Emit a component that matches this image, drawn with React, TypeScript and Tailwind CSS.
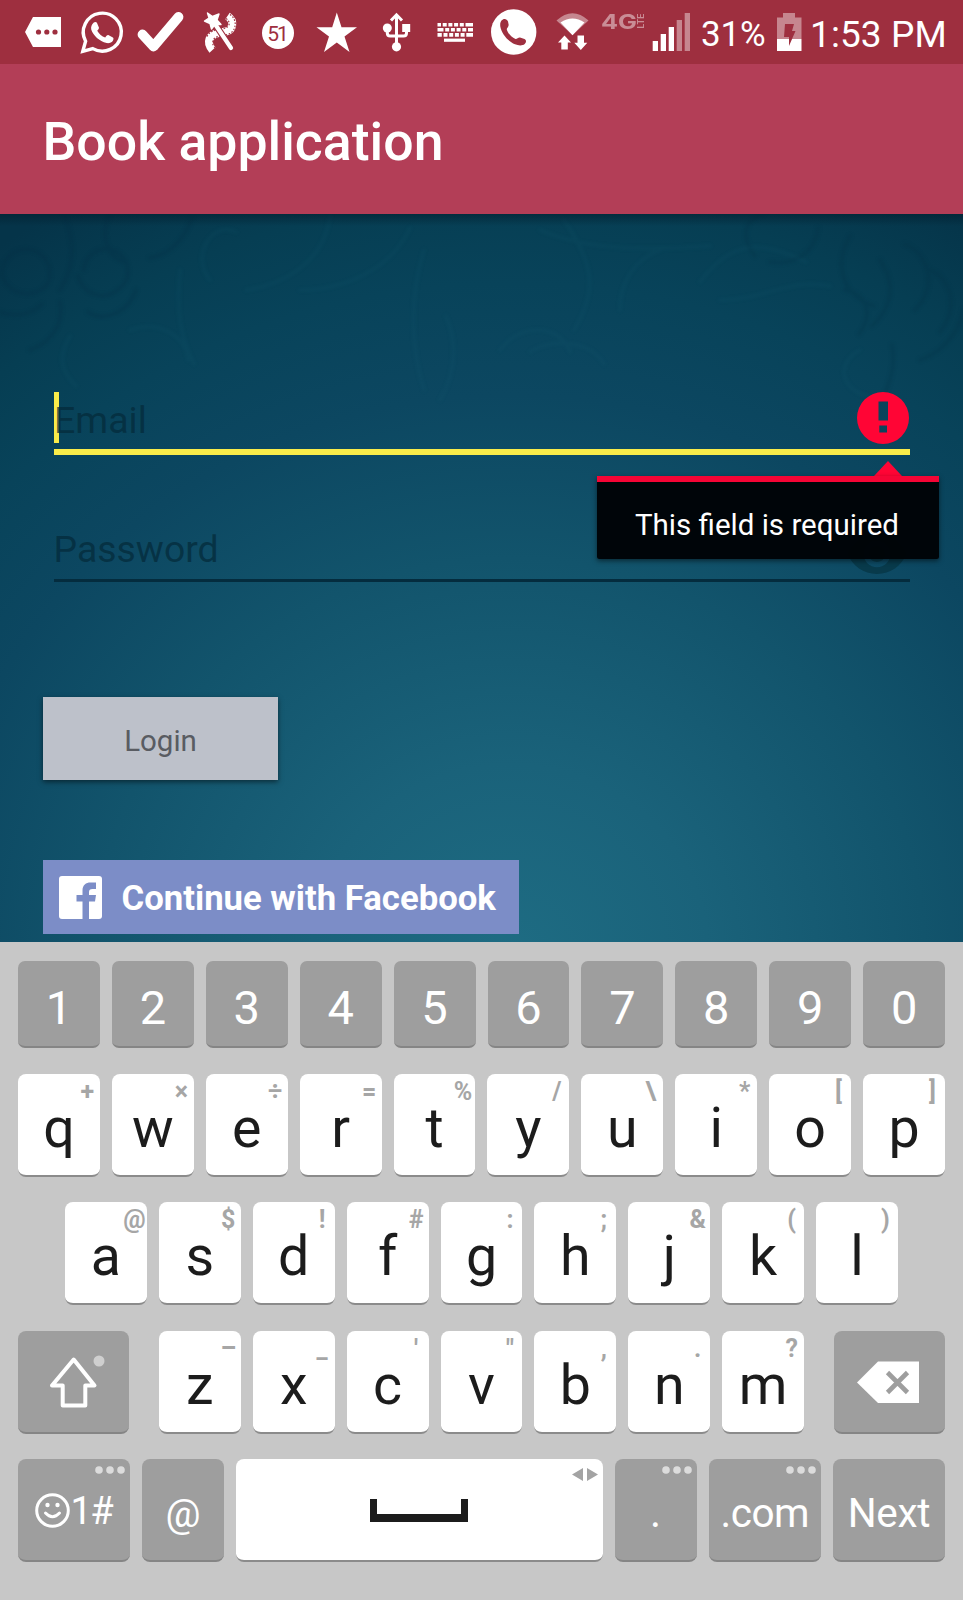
import React from "react";

type IconProps = { x: number; w: number; className: string; children: React.ReactNode };

/* One slot of the status bar; every glyph shares the bar's coordinate space. */
function Slot({ x, w, className, children }: IconProps) {
  return (
    <svg viewBox={`${x} 0 ${w} 64`} className={`h-16 shrink-0 ${className}`} fill="#fff">
      {children}
    </svg>
  );
}

function StatusBar() {
  return (
    <div className="flex h-16 w-full shrink-0 items-start bg-[#9e2f3f] text-white">
      <Slot x={0} w={70} className="w-[70px]">
        <path d="M25 32 33 17H61V47H33Z" />
        <g fill="#9e2f3f">
          <circle cx="38.5" cy="32" r="2.6" />
          <circle cx="46.8" cy="32" r="2.6" />
          <circle cx="55" cy="32" r="2.6" />
        </g>
      </Slot>
      <Slot x={70} w={60} className="w-[60px]">
        <path
          d="M82.8 51.3 85.6 41.2A19 19 0 1 1 92.8 48.6Z"
          fill="none"
          stroke="#fff"
          strokeWidth="3.4"
          strokeLinejoin="miter"
        />
        <path d="M93.800 22.600c.800-.800 2.600-.800 3.100.200l2 4.600c.300.800-.200 1.600-1.700 3.300 2 3.500 4.600 5.600 8 6.900 1.700-2.300 2.300-2.800 3.100-2.500l4.600 2.300c.8.5.7 1.700.1 3.100-1 2.100-4.300 3-6.300 2.500-7.500-1.700-13.300-7.200-15.400-13.200-.7-2.600.5-5.600 2.500-7.200Z" />
      </Slot>
      <Slot x={130} w={60} className="w-[60px]">
        <path
          d="M142.500 34.500 153.500 46.500 178.500 17"
          fill="none"
          stroke="#fff"
          strokeWidth="9.800"
          strokeLinecap="round"
          strokeLinejoin="round"
        />
      </Slot>
      <Slot x={190} w={60} className="w-[60px]">
        <path
          d="M227.500 16C235 21 233 30 226 31.500 219 33 212 33 209.500 39 208 43 209 46 212.500 50"
          fill="none"
          stroke="#fff"
          strokeWidth="8"
        />
        <path
          d="M226 18.500C231 22 230 27 224.500 28.500 217 30 209 30 206.500 38M230 14.500C238 20 236.500 32 227.500 34.500 220 36.500 214 36 213 41 212 44 213.500 46 215 48"
          fill="none"
          stroke="#9e2f3f"
          strokeWidth="1.100"
          strokeDasharray="1.600 1.600"
        />
        <path d="M217 27 231 48" stroke="#9e2f3f" strokeWidth="6.500" />
        <path d="M215 24 231 48" stroke="#fff" strokeWidth="4.200" strokeLinecap="round" />
        <path
          d="M207.500 13 212.500 16.500 219 14 217 20 221 24.500 215 24.500 211.500 29 210 23.500 204.500 21 209 18Z"
          stroke="#fff"
          strokeWidth="1.400"
          strokeLinejoin="round"
        />
      </Slot>
      <Slot x={250} w={55} className="w-[55px]">
        <circle cx="278" cy="33" r="16" />
        <text
          x="277"
          y="40.500"
          textAnchor="middle"
          fill="#9e2f3f"
          className="font-['Roboto',sans-serif] text-[21px] tracking-[-2px]"
        >
          51
        </text>
      </Slot>
      <Slot x={305} w={65} className="w-[65px]">
        <path d="M336.800 12.500 341.500 27.300H357L344.500 36.500 349.500 52 336.800 42.500 324 52 329 36.500 316.500 27.300H332.200Z" />
      </Slot>
      <Slot x={370} w={55} className="w-[55px]">
        <path
          d="M396.500 47V15M387.300 28V33Q387.300 36 390.300 36H403.500Q406.500 36 406.500 33V27"
          fill="none"
          stroke="#fff"
          strokeWidth="3"
        />
        <path d="M391 20.500 396.500 14.800 402 20.500" fill="none" stroke="#fff" strokeWidth="3" />
        <circle cx="387.300" cy="28" r="4.500" />
        <circle cx="396.500" cy="46.800" r="4.600" />
        <rect x="402.200" y="24" width="8" height="8" />
      </Slot>
      <Slot x={425} w={60} className="w-[60px]">
        <g fill="none" stroke="#fff" strokeWidth="3.600">
          <path d="M437.500 24.700H473" strokeDasharray="3.500 1.700 4 1.700 4 1.700 4 1.700 4 1.700 7.500 0" />
          <path d="M437.500 29.800H473" strokeDasharray="6 1.700 4 1.700 4 1.700 4 1.700 4 1.700 5 0" />
          <path d="M437.500 34.900H473" strokeDasharray="4.300 1.700 4 1.700 4 1.700 4 1.700 4 1.700 6.700 0" />
        </g>
        <rect x="444" y="38.600" width="21" height="3.200" />
      </Slot>
      <Slot x={485} w={60} className="w-[60px]">
        <circle cx="513.700" cy="32" r="22.700" />
        <path
          fill="#9e2f3f"
          d="M501.500 20.500C503.500 18 507 18.500 508 21.500L508.600 24.500C509 27 506.500 28 506.800 29.500 507.600 33 511.500 37.500 515.500 39 517 39.300 518 37.300 520 37.500L524.500 39C526.600 40 526.300 42.500 524.700 44 522.500 46 518.500 45.800 515 44.300 507.500 41 501.500 33.500 500.300 26.500 500 24 500.300 22 501.500 20.500Z"
        />
      </Slot>
      <Slot x={545} w={53} className="w-[53px]">
        <path d="M556.500 20.500Q572.500 6 588.500 20.500L572.500 35Z" opacity=".42" />
        <path d="M560.500 22.500Q572.500 14.500 584.500 22.500L572.500 35.300Z" />
        <path d="M564.500 35.500 571 42.500H567.800V49.500H561.300V42.500H558ZM580.800 50 587.300 42.800H584V35.500H577.500V42.800H574.300Z" />
      </Slot>
      <Slot x={598} w={48} className="w-[48px]">
        <g opacity=".45">
          <text
            x="601"
            y="28.500"
            textLength="36"
            lengthAdjust="spacingAndGlyphs"
            className="font-['Inter',sans-serif] text-[20px] font-bold"
          >
            4G
          </text>
          <text
            transform="translate(644 28.500) rotate(-90)"
            textLength="15"
            lengthAdjust="spacingAndGlyphs"
            className="font-['Inter',sans-serif] text-[8.500px] font-semibold"
          >
            LTE
          </text>
        </g>
      </Slot>
      <Slot x={646} w={52} className="w-[52px]">
        <path d="M652.700 41H658V51H652.700ZM660.700 34H666V51H660.700ZM668.700 27H674V51H668.700Z" />
        <path d="M676.700 20H682V51H676.700ZM684.700 13H690V51H684.700Z" opacity=".42" />
      </Slot>
      <div className="w-[74px] shrink-0 pl-[3px] text-[35px] leading-[70px] tracking-[-0.2px] whitespace-nowrap">31%</div>
      <Slot x={772} w={34} className="w-[34px]">
        <path d="M777 17.500H783V13H795V17.500H801.500V39H777Z" opacity=".42" />
        <path d="M777 39H801.500V51H777Z" />
        <path d="M785 24H794L792 31H795.500L789 46V37H784Z" fill="#9e2f3f" />
      </Slot>
      <div className="pl-[4px] text-[37px] leading-[69px] tracking-[0.1px] whitespace-nowrap">1:53 PM</div>
    </div>
  );
}

/* Faint floral scrollwork over the top of the login backdrop. */
function Scrollwork() {
  return (
    <svg
      viewBox="0 214 963 728"
      className="absolute inset-0 h-full w-full blur-[1.500px]"
      fill="none"
      strokeLinecap="round"
    >
      <g stroke="#022b40" strokeWidth="4" opacity=".2">
        <path d="M2 275a24 24 0 1 1 46 8a26 26 0 0 1-46-8M60 290c20-30 10-60 4-76M84 270a22 22 0 1 1 36 18c-18 16-38 4-42-12M110 214c-10 20-4 42 14 48M150 258c20-4 34-18 42-40M88 312c14 10 40 2 48-22" />
        <path d="M0 312c16 6 32 2 42-8M30 350c22-8 34-26 30-48M755 256c-14-18-12-36 8-42M770 262c24 4 46-10 48-34M850 236c-18 30-6 60 24 70M880 260c18 26 10 50-8 66M905 244c26 12 32 44 10 66M930 270c22 8 28 40 10 62M845 290c20 4 30 22 14 44M892 345c4 20-2 36-8 52M920 360c24-8 40-30 43-50" />
      </g>
      <g stroke="#1a6078" strokeWidth="4" opacity=".1">
        <path d="M210 280c-20-24 2-60 26-48M330 214c-4 46-44 70-84 76M300 290c40 0 90-18 110-62M424 250c-14 44-14 96 0 140M440 400c18-32 16-60 6-84M540 230c50 22 116 20 170 16M564 220c30 44 34 70 10 110M620 310c0-28 14-50 40-60M700 282c30-40 58-44 106-20M720 300c46 0 66-22 110-14" />
        <path d="M70 336c-12 20-10 34 6 50M130 330c30-10 56 6 58 30M180 270c-4 40 0 66 14 94M500 350c20-28 60-26 70 2M530 352c20-14 60-12 74 12M860 350c-24 12-20 40 8 46" />
      </g>
    </svg>
  );
}

function LoginPanel() {
  return (
    <div className="relative h-[728px] w-full shrink-0 overflow-hidden bg-[#0b4860] bg-[radial-gradient(ellipse_900px_860px_at_510px_740px,#1e6c83_0%,#1a627a_22%,#12546c_46%,#0c4761_65%,#08435a_78%,#063e53_88%,#053449_100%)]">
      <Scrollwork />
      <div className="absolute inset-x-0 top-0 h-3 bg-gradient-to-b from-[#021f2e]/60 to-transparent" />
      <div className="relative flex flex-col items-start pl-[43px]">
        <div className="mt-[178px] ml-[10.500px] flex h-[63px] w-[856px] items-start border-b-[6px] border-[#f9ec4a]">
          <div className="h-[51px] w-[5.500px] bg-[#f9ec4a]" />
          <div className="-ml-[5px] grow text-[37.500px] leading-[56px] text-[#042b3b]/75">Email</div>
          <svg viewBox="0 0 52 52" className="mr-[1px] h-[52px] w-[52px]">
            <path
              fillRule="evenodd"
              fill="#ff0535"
              d="M26 0a26 26 0 1 0 0 52a26 26 0 1 0 0-52ZM21.500 9.500H31V28.500H21.500ZM22.300 33.500H30V40.500H22.300Z"
            />
          </svg>
        </div>
        <div className="relative mt-[67px] ml-[10.500px] flex h-[60px] w-[856px] items-start border-b-[3px] border-[#042c3e]">
          <div className="grow text-[37.400px] leading-[55px] text-[#042b3b]/75">Password</div>
          <svg viewBox="0 0 24 24" className="mr-[1px] h-[64px] w-[64px] shrink-0" fill="#083a4b">
            <path d="M12 4.500C7 4.500 2.730 7.610 1 12c1.730 4.390 6 7.500 11 7.500s9.270-3.110 11-7.500c-1.730-4.390-6-7.500-11-7.500zM12 17c-2.760 0-5-2.240-5-5s2.240-5 5-5 5 2.240 5 5-2.240 5-5 5zm0-8c-1.660 0-3 1.340-3 3s1.340 3 3 3 3-1.340 3-3-1.340-3-3-3z" />
          </svg>
          {/* Validation popup anchored to the email field */}
          <div className="absolute -top-[61px] right-[-29px] flex w-[342px] flex-col items-end">
            <svg viewBox="0 0 28 15" className="mr-[37px] h-[15px] w-7" fill="#ff0535">
              <path d="M14 0 28 15H0Z" />
            </svg>
            <div className="h-[83px] w-full rounded-b-[2px] border-t-[6px] border-[#f50535] bg-[#000306]/97 pr-[1px] text-center text-[29.500px] leading-[86px] whitespace-nowrap text-white shadow-[0_2px_5px_rgba(0,0,0,0.5)]">
              This field is required
            </div>
          </div>
        </div>
        <button className="mt-[115px] h-[83px] w-[235px] bg-[#bdc1ca] pt-[2px] text-[29.500px] leading-[85px] text-[#595c62] shadow-[0_2px_5px_rgba(0,0,0,0.5)]">
          Login
        </button>
        <button className="mt-[80px] flex h-[74px] w-[476px] items-center bg-[#7c8dc7] pl-4 text-left">
          <svg viewBox="0 0 43 43" className="h-[43px] w-[43px]">
            <rect width="43" height="43" rx="3" fill="#fff" />
            <path
              fill="#7c8dc7"
              d="M23.500 43V25.500H17.500V19H23.500V14.500C23.500 9 27 6.500 31.500 6.500H37V13H33.500C31 13 30 14 30 16V19H37L36 25.500H30V43Z"
            />
          </svg>
          <span className="ml-[19.500px] pt-[2px] text-[34.700px] leading-[74px] font-bold whitespace-nowrap text-white">
            Continue with Facebook
          </span>
        </button>
      </div>
    </div>
  );
}

function DigitKey({ label }: { label: string }) {
  return (
    <div className="h-[87px] flex-1 rounded-[7px] border-b-2 border-[#858585] bg-[#9e9e9e] text-center text-[47px] leading-[93px] text-white">
      {label}
    </div>
  );
}

function LetterKey({ label, hint }: { label: string; hint: string }) {
  return (
    <div className="relative h-[103px] w-[81.900px] shrink-0 rounded-[8px] border-b-2 border-[#8b8b8b] bg-white text-center text-[55.500px] leading-[110px] text-[#1c1c1c]">
      {label}
      <span className="absolute top-0 right-0 w-[25px] text-center text-[25px] leading-[35px] font-bold text-[#a6a6a6]">
        {hint}
      </span>
    </div>
  );
}

function Dots() {
  return (
    <svg viewBox="0 0 30 8" className="absolute top-[6.500px] right-[5px] h-2 w-[30px]" fill="#dcdcdc">
      <circle cx="4" cy="4" r="3.800" />
      <circle cx="15" cy="4" r="3.800" />
      <circle cx="26" cy="4" r="3.800" />
    </svg>
  );
}

function GreyKey({ className, children }: { className: string; children: React.ReactNode }) {
  return (
    <div
      className={`relative h-[103px] shrink-0 rounded-[8px] border-b-2 border-[#858585] bg-[#9e9e9e] text-center text-white ${className}`}
    >
      {children}
    </div>
  );
}

const rowOne: [string, string][] = [
  ["q", "+"], ["w", "×"], ["e", "÷"], ["r", "="], ["t", "%"],
  ["y", "/"], ["u", "\\"], ["i", "*"], ["o", "["], ["p", "]"],
];
const rowTwo: [string, string][] = [
  ["a", "@"], ["s", "$"], ["d", "!"], ["f", "#"], ["g", ":"],
  ["h", ";"], ["j", "&"], ["k", "("], ["l", ")"],
];
const rowThree: [string, string][] = [
  ["z", "–"], ["x", "_"], ["c", "'"], ["v", "\""], ["b", ","], ["n", "."], ["m", "?"],
];

function Keyboard() {
  return (
    <div className="flex h-[658px] w-full shrink-0 flex-col bg-[#c7c7c7] px-[18px] pt-[19px]">
      <div className="flex gap-3">
        {"1234567890".split("").map((d) => (
          <DigitKey key={d} label={d} />
        ))}
      </div>
      <div className="mt-[25.500px] flex gap-3">
        {rowOne.map(([l, h]) => (
          <LetterKey key={l} label={l} hint={h} />
        ))}
      </div>
      <div className="mt-[25.500px] flex justify-center gap-3">
        {rowTwo.map(([l, h]) => (
          <LetterKey key={l} label={l} hint={h} />
        ))}
      </div>
      <div className="mt-[25.500px] flex justify-between">
        <GreyKey className="w-[111px]">
          <svg viewBox="0 0 111 101" className="h-[101px] w-[111px]">
            <path
              d="M55.700 28.500 76.500 54.500H67.300V74.500H44.700V54.500H34Z"
              fill="none"
              stroke="#fff"
              strokeWidth="4"
              strokeLinejoin="round"
            />
            <circle cx="81" cy="30" r="5.500" fill="#cfcfcf" />
          </svg>
        </GreyKey>
        <div className="flex gap-3">
          {rowThree.map(([l, h]) => (
            <LetterKey key={l} label={l} hint={h} />
          ))}
        </div>
        <GreyKey className="w-[111px]">
          <svg viewBox="0 0 111 101" className="h-[101px] w-[111px]">
            <path d="M23 51.500 44 30.500H85V72H44Z" fill="#fff" />
            <path d="M53.500 41.500 73.500 61.500M73.500 41.500 53.500 61.500" stroke="#9e9e9e" strokeWidth="4.600" />
          </svg>
        </GreyKey>
      </div>
      <div className="mt-[25.500px] flex gap-3">
        <GreyKey className="flex w-[112px] items-start pl-[17px]">
          <Dots />
          <svg
            viewBox="0 0 35 35"
            className="mt-[33.500px] h-[35px] w-[35px] shrink-0"
            fill="none"
            stroke="#fff"
            strokeWidth="3"
            strokeLinecap="round"
          >
            <circle cx="17.500" cy="17.500" r="15.800" />
            <path d="M10.500 20Q17.500 27.500 24.500 20" />
            <circle cx="12.500" cy="12" r="2.200" fill="#fff" stroke="none" />
            <circle cx="22.500" cy="12" r="2.200" fill="#fff" stroke="none" />
          </svg>
          <span className="pl-[0.500px] text-[38px] leading-[104px] tracking-[-1.500px] whitespace-nowrap">1#</span>
        </GreyKey>
        <GreyKey className="w-[82px] text-[39px] leading-[110px]">@</GreyKey>
        <div className="relative h-[103px] flex-1 rounded-[8px] border-b-2 border-[#8b8b8b] bg-white">
          <div className="mx-auto mt-10 h-[23px] w-[98px] border-x-[7px] border-b-8 border-[#1c1c1c]" />
          <svg viewBox="0 0 26 13" className="absolute top-[8.500px] right-[4.500px] h-[13px] w-[26px]" fill="#a3a3a3">
            <path d="M0 6.500 11 0V13ZM26 6.500 15 0V13Z" />
          </svg>
        </div>
        <GreyKey className="w-[82px] text-[42px] leading-[108px]">
          <Dots />.
        </GreyKey>
        <GreyKey className="w-[112.500px] text-[40.500px] leading-[108px] tracking-[-0.500px]">
          <Dots />.com
        </GreyKey>
        <GreyKey className="w-[112px] text-[40.500px] leading-[108px] tracking-[-0.300px]">Next</GreyKey>
      </div>
    </div>
  );
}

export default function App() {
  return (
    <div className="flex h-[1600px] w-[963px] flex-col overflow-hidden font-['Roboto',sans-serif]">
      <StatusBar />
      <div className="flex h-[150px] w-full shrink-0 items-start bg-[#b33e57] pl-[42.500px]">
        <h1 className="text-[53.600px] leading-[156px] font-medium whitespace-nowrap text-white">Book application</h1>
      </div>
      <LoginPanel />
      <Keyboard />
    </div>
  );
}
